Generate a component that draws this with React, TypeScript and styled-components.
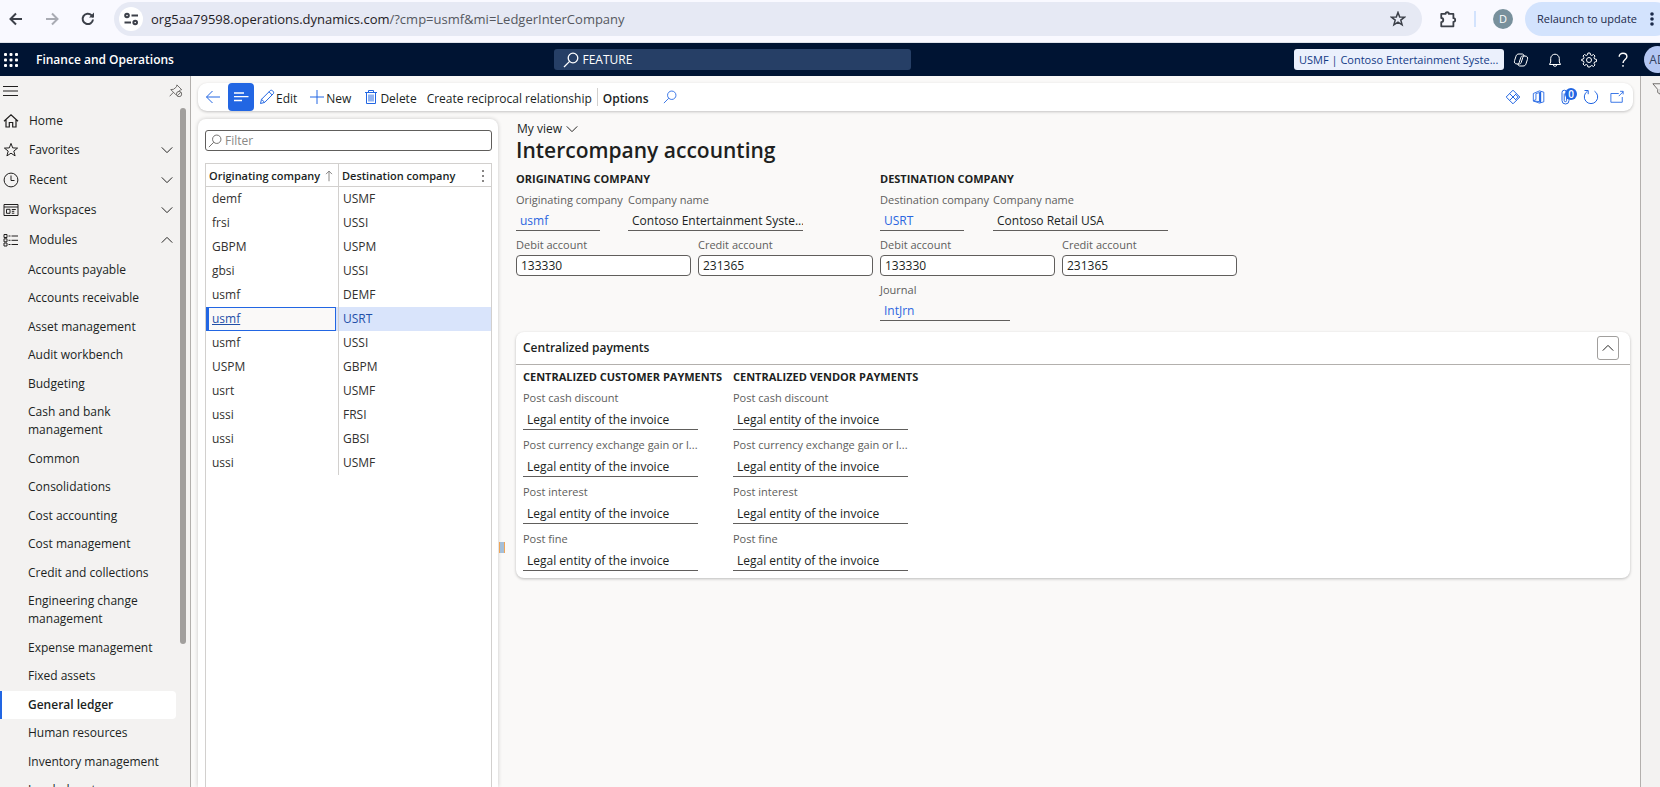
import React from "react";
import styled, { createGlobalStyle, css } from "styled-components";

const color = {
  text: "#201f1e",
  muted: "#605e5c",
  line: "#d2d0ce",
  page: "#faf9f8",
  rail: "#f3f2f1",
  brand: "#2266e3",
  link: "#2b66e0",
  navy: "#001433",
};

const GlobalStyle = createGlobalStyle`
  * { box-sizing: border-box; }
  body {
    margin: 0;
    font-family: "Open Sans", "Noto Sans", sans-serif;
    font-size: 12px;
    line-height: 16px;
    color: ${color.text};
    background: ${color.page};
  }
  button, input { font: inherit; color: inherit; }
  h1, h2, ul { margin: 0; padding: 0; }
  ul { list-style: none; }
  a { color: inherit; text-decoration: none; }
`;

/* ---------- icons ---------- */

type IconProps = { size?: number; stroke?: number; children: React.ReactNode };

const Icon = ({ size = 16, stroke = 1, children }: IconProps) => (
  <svg
    width={size}
    height={size}
    viewBox="0 0 16 16"
    fill="none"
    stroke="currentColor"
    strokeWidth={stroke}
    aria-hidden="true"
  >
    {children}
  </svg>
);

const ArrowIcon = ({ flip = false }: { flip?: boolean }) => (
  <Icon stroke={2}>
    {flip ? <path d="M2 8h11M8 2.5L13.5 8 8 13.5" /> : <path d="M14 8H3M8 2.5L2.5 8 8 13.5" />}
  </Icon>
);
const ReloadIcon = () => (
  <Icon stroke={2}>
    <path d="M13 8.5A5.2 5.2 0 1 1 11.5 4.2L13.4 6" />
    <path d="M14 1.5v5H9z" fill="currentColor" stroke="none" />
  </Icon>
);
const SiteInfoIcon = () => (
  <Icon stroke={2}>
    <circle cx="4" cy="4.5" r="1.8" />
    <path d="M8.5 4.5H15M1.5 11.5H8" />
    <circle cx="12.2" cy="11.5" r="1.8" />
  </Icon>
);
const StarIcon = ({ stroke = 1 }: { stroke?: number }) => (
  <Icon stroke={stroke}>
    <path d="M8 1.4l1.7 4.5 4.9.2-3.8 3 1.3 4.8L8 11.2l-4.1 2.7 1.3-4.8-3.8-3 4.9-.2z" />
  </Icon>
);
const PuzzleIcon = () => (
  <Icon size={18} stroke={1.6}>
    <path
      d="M2 3.500h3.800a1.500 1.500 0 0 1 3 0H12.800v3.800a1.600 1.600 0 0 1 0 3.200V14.500H2v-3.800a1.800 1.800 0 0 0 0-3.600z"
      strokeLinejoin="round"
    />
  </Icon>
);
const DotsIcon = ({ r = 1.5 }: { r?: number }) => (
  <Icon>
    <g fill="currentColor" stroke="none">
      <circle cx="8" cy="3" r={r} />
      <circle cx="8" cy="8" r={r} />
      <circle cx="8" cy="13" r={r} />
    </g>
  </Icon>
);
const WaffleIcon = () => (
  <Icon>
    <g fill="currentColor" stroke="none">
      {[1, 6.5, 12].map((y) => [1, 6.5, 12].map((x) => <rect key={`${x}-${y}`} x={x} y={y} width="3" height="3" rx="1" />))}
    </g>
  </Icon>
);
const SearchIcon = ({ size = 16, stroke = 1 }: { size?: number; stroke?: number }) => (
  <Icon size={size} stroke={stroke}>
    <circle cx="10" cy="6" r="4.8" />
    <path d="M6.600 9.400L1 15" />
  </Icon>
);
const CopilotIcon = () => (
  <Icon>
    <path d="M6.500 12H4.400C1.500 12 1 10.400 1.600 8.500L3 4.200C3.600 2.500 4.400 2 6 2h3.200c1 0 1.600.6 1.900 2M9.500 4h2.100c2.900 0 3.400 1.600 2.800 3.500L13 11.800c-.6 1.700-1.400 2.200-3 2.200H6.800c-1 0-1.600-.6-1.900-2" />
    <path d="M9.500 4C8.400 4 8 4.800 7.700 5.800L6.300 10.200C6 11.300 5.600 12 4.600 12M6.500 12c1.100 0 1.500-.8 1.800-1.800l1.400-4.400C10 4.700 10.400 4 11.400 4" />
  </Icon>
);
const BellIcon = () => (
  <Icon>
    <path d="M2.500 12.500h11L12.300 10V6.500a4.300 4.300 0 0 0-8.600 0V10z" strokeLinejoin="round" />
    <path d="M6.200 12.500a1.800 1.800 0 0 0 3.600 0" />
  </Icon>
);
const GearIcon = () => (
  <Icon>
    <path d="M6.900 1h2.200l.4 1.900 1.300.6 1.700-1 1.500 1.500-1 1.700.6 1.300 1.900.4v2.200l-1.900.4-.6 1.300 1 1.700-1.500 1.500-1.700-1-1.300.6L9.100 15H6.900l-.4-1.900-1.300-.6-1.700 1L2 12l1-1.700L2.400 9 .6 8.600V7.400L2.400 7 3 5.700 2 4l1.500-1.500 1.700 1 1.300-.6z" />
    <circle cx="8" cy="8" r="2.500" />
  </Icon>
);
const HelpIcon = () => (
  <Icon stroke={1.4}>
    <path d="M4.200 4.800C4.200 2.500 5.800 1.300 8 1.300s3.900 1.300 3.900 3.400C11.900 7.300 8 7.700 8 11" />
    <path d="M8 13v1.700" />
  </Icon>
);
const MenuIcon = () => (
  <Icon>
    <path d="M1 3.500h15M1 8h15M1 12.500h15" />
  </Icon>
);
const PinIcon = () => (
  <Icon size={14}>
    <path d="M9 1l5.500 5.500-1.600.3-2 2M9 1l-.4 2.200L5.300 6 2 6.400l6 6M5 9.500L.8 14" />
    <circle cx="11.500" cy="11.500" r="3" />
    <path d="M9.400 13.600l4.200-4.200" />
  </Icon>
);
const HomeIcon = () => (
  <Icon stroke={1.2}>
    <path d="M1 8.300L8 1.800l7 6.500M3 6.600V14h3.300V9.500h3.400V14H13V6.600" />
  </Icon>
);
const ClockIcon = () => (
  <Icon>
    <circle cx="8" cy="8" r="6.900" />
    <path d="M8 3.500V8.500h3.500" />
  </Icon>
);
const WorkspaceIcon = () => (
  <Icon>
    <path d="M1 2.500h14v11H1zM1 5h14M3.500 7.300h3.500v4H3.500zM8.800 7.500h4M8.800 9.300h2.500M8.800 11.200h2.500" />
  </Icon>
);
const ModulesIcon = () => (
  <Icon>
    <path d="M1 2.500h3v3H1zM1 6.800h3v3H1zM1 11h3v3H1zM5.500 4h2M5.500 8.300h2M5.500 12.500h2M8.500 4H15M8.500 8.300H15M8.500 12.500H15" />
  </Icon>
);
const ChevronIcon = ({ up = false }: { up?: boolean }) => (
  <Icon size={12} stroke={1.3}>
    {up ? <path d="M1 11.500l7-7 7 7" /> : <path d="M1 4.500l7 7 7-7" />}
  </Icon>
);
const BackIcon = () => (
  <Icon>
    <path d="M15 8H1.500M7.500 2L1.500 8l6 6" />
  </Icon>
);
const LinesIcon = () => (
  <Icon stroke={1.3}>
    <path d="M1 4h10M1 7.700h14.500M1 11.500h8" />
  </Icon>
);
const PencilIcon = () => (
  <Icon>
    <path d="M1.500 14.500l1-4.200 8.800-8.800c1.500-1.100 4.200 1.400 3.100 3.100l-8.700 8.800zM10 2.800l3.200 3.200M2.500 10.300l3.200 3.100" />
  </Icon>
);
const PlusIcon = () => (
  <Icon>
    <path d="M8 1v14M1 8h14" />
  </Icon>
);
const TrashIcon = () => (
  <Icon>
    <path d="M2 3.500h12M5.500 3.500v-2h5v2M3.500 3.500v11h9v-11" />
    <path d="M6 5.500v7M8 5.500v7M10 5.500v7" />
  </Icon>
);
const DiamondIcon = () => (
  <Icon>
    <path d="M8 1.200l6.800 6.800L8 14.800 1.200 8zM4.600 4.600l3.400 3.400 3.400-3.400M8 8L4.600 11.400M8 8l3.400 3.400M8 8l2.600-2.600 2.600 2.600-2.600 2.600z" strokeLinejoin="round" />
  </Icon>
);
const OfficeIcon = () => (
  <Icon size={14}>
    <path d="M1.500 4L8.500 1l5 1.500v11L8.500 15l-7-2.500 7 .8V3L4.500 4v7l-3 1.300z" strokeLinejoin="round" />
    <path d="M9.500 2v12.500" strokeWidth="2" />
  </Icon>
);
const ClipIcon = () => (
  <Icon>
    <path d="M12 3v8.500a3.500 3.500 0 0 1-7 0V3.500a2.300 2.300 0 0 1 4.600 0v8a1.200 1.200 0 0 1-2.400 0V4.500" />
  </Icon>
);
const RefreshIcon = () => (
  <Icon>
    <path d="M11.500 2.200A6.700 6.700 0 1 1 4.500 2.200" />
    <path d="M1.500 1.500h3.700v3.700" />
  </Icon>
);
const PopoutIcon = () => (
  <Icon size={14}>
    <path d="M10 4H1v10h13V8M10 7l5-5M11.500 1.500H15V5" />
  </Icon>
);
const FunnelIcon = () => (
  <Icon size={14}>
    <path d="M1 2h14L9.500 8.500V14l-3-2V8.500z" />
  </Icon>
);
const SortUpIcon = () => (
  <Icon size={12}>
    <path d="M8 15V1.500M4 5.500l4-4 4 4" />
  </Icon>
);

/* ---------- browser bar ---------- */

const Shell = styled.div`
  display: flex;
  flex-direction: column;
  height: 100vh;
  overflow: hidden;
`;

const BrowserBar = styled.div`
  display: flex;
  align-items: flex-start;
  flex: none;
  height: 43px;
  padding-top: 2px;
  background: #f9f9ff;
  border-bottom: 1px solid #dfe3ea;
  color: #3c4049;
`;

const BarButton = styled.button<{ $faded?: boolean; $width: number }>`
  display: flex;
  align-items: center;
  justify-content: center;
  width: ${(p) => p.$width}px;
  height: 34px;
  padding: 0;
  border: 0;
  background: none;
  ${(p) => p.$faded && css`color: #a9abb3;`}
`;

const NavButtons = styled.div`
  display: flex;
  width: 114px;
  padding-right: 8px;
`;

const Omnibox = styled.div`
  display: flex;
  flex: 1;
  align-items: center;
  height: 34px;
  padding-left: 5px;
  border-radius: 17px;
  background: #e6e9f4;
`;

const SiteInfo = styled.button`
  display: flex;
  align-items: center;
  justify-content: center;
  width: 24px;
  height: 24px;
  margin-right: 8px;
  padding: 0;
  border: 0;
  border-radius: 50%;
  background: #ffffff;
`;

const Url = styled.div`
  flex: 1;
  font-size: 13px;
  line-height: 20px;
  color: #55585f;
  white-space: nowrap;
  b {
    font-weight: 400;
    color: #1f2024;
  }
`;

const BarDivider = styled.span`
  width: 2px;
  height: 16px;
  margin: 9px 17px 0 0;
  background: #d3e3fd;
`;

const ProfileBadge = styled.button`
  width: 20px;
  height: 20px;
  margin: 7px 12px 0 0;
  padding: 0;
  border: 0;
  border-radius: 50%;
  background: #78909c;
  color: #ffffff;
  font-size: 11px;
  line-height: 20px;
`;

const Relaunch = styled.button`
  display: flex;
  align-items: center;
  gap: 7px;
  height: 34px;
  margin-right: -12px;
  padding: 0 12px;
  border: 0;
  border-radius: 17px;
  background: #d3e3fd;
  color: #1b2a4a;
  font-size: 11px;
  white-space: nowrap;
`;

/* ---------- application header ---------- */

const AppHeader = styled.header`
  display: grid;
  grid-template-columns: 20fr 357px 27fr;
  align-items: center;
  flex: none;
  height: 33px;
  overflow: hidden;
  background: ${color.navy};
  color: #ffffff;
`;

const Brand = styled.div`
  display: flex;
  align-items: center;
  gap: 17px;
  padding-left: 3px;
  font-weight: 600;
`;

const PlainButton = styled.button`
  display: flex;
  padding: 0;
  border: 0;
  background: none;
`;

const GlobalSearch = styled.label`
  display: flex;
  align-items: center;
  gap: 3px;
  height: 21px;
  padding-left: 9px;
  border-radius: 3px;
  background: #263f66;
  input {
    flex: 1;
    min-width: 0;
    padding: 0;
    border: 0;
    outline: 0;
    background: none;
  }
`;

const HeaderTools = styled.div`
  display: flex;
  align-items: center;
  justify-content: flex-end;
`;

const CompanyPicker = styled.button`
  width: 210px;
  height: 21px;
  padding: 0 5px;
  border: 0;
  border-radius: 3px;
  background: #ebf0fc;
  color: #123a86;
  font-size: 11px;
  text-align: left;
  white-space: nowrap;
`;

const HeaderButton = styled(PlainButton)`
  align-items: center;
  justify-content: center;
  width: 34px;
  height: 33px;
`;

const Avatar = styled.button`
  flex: none;
  width: 27px;
  height: 27px;
  margin: 0 -11px 0 4px;
  padding: 0;
  border: 0;
  border-radius: 50%;
  background: #b4c7f3;
  color: #33415f;
`;

/* ---------- navigation ---------- */

const Body = styled.div`
  display: flex;
  flex: 1;
  min-height: 0;
`;

const Sidebar = styled.nav`
  display: flex;
  flex-direction: column;
  flex: none;
  width: 191px;
  border-right: 1px solid #b3b0ad;
  background: ${color.rail};
`;

const SidebarTop = styled.div`
  display: flex;
  align-items: center;
  justify-content: space-between;
  height: 32px;
  padding: 0 7px 2px 2px;
  color: ${color.muted};
  button:first-child {
    color: ${color.text};
  }
`;

const SidebarScroll = styled.div`
  display: flex;
  flex: 1;
  min-height: 0;
  overflow: hidden;
`;

const NavList = styled.div`
  width: 176px;
  ul {
    padding-top: 1px;
  }
`;

const NavRow = styled.button`
  display: flex;
  align-items: center;
  gap: 10px;
  width: 100%;
  height: 30px;
  padding: 0 3px;
  border: 0;
  background: none;
  text-align: left;
  span {
    flex: 1;
  }
  &:first-child {
    height: 27px;
    padding-bottom: 2px;
  }
`;

const ModuleItem = styled.li<{ $active?: boolean }>`
  padding: 5px 8px 5px 28px;
  line-height: 18px;
  border-radius: 0 4px 4px 0;
  &:nth-child(even) {
    padding-bottom: 6px;
  }
  ${(p) =>
    p.$active &&
    css`
      padding-left: 26px;
      border-left: 2px solid ${color.brand};
      background: #ffffff;
      font-weight: 600;
    `}
`;

const ScrollTrack = styled.div`
  width: 6px;
  margin-left: 4px;
`;

const ScrollThumb = styled.div`
  height: 79%;
  border-radius: 3px;
  background: #a19f9d;
`;

/* ---------- work area ---------- */

const Main = styled.main`
  display: flex;
  flex-direction: column;
  flex: 1;
  min-width: 0;
  padding: 7px 7px 0 7px;
`;

const Toolbar = styled.div`
  display: flex;
  align-items: center;
  flex: none;
  height: 28px;
  padding-right: 3px;
  border-radius: 9px;
  background: #ffffff;
  box-shadow: 0 1px 3px rgba(0, 0, 0, 0.22);
`;

const Action = styled.button<{ $strong?: boolean; $pad?: number }>`
  display: flex;
  align-items: center;
  gap: 1px;
  padding: 3px ${(p) => p.$pad ?? 5}px 0;
  border: 0;
  background: none;
  font-weight: ${(p) => (p.$strong ? 600 : 400)};
  white-space: nowrap;
  svg {
    margin-top: -3px;
    color: ${color.brand};
  }
`;

const ToggleList = styled.button`
  display: flex;
  align-items: center;
  justify-content: center;
  width: 26px;
  height: 28px;
  padding: 0;
  border: 0;
  border-radius: 4px;
  background: ${color.brand};
  color: #ffffff;
`;

const ToolbarDivider = styled.span`
  width: 1px;
  height: 18px;
  background: ${color.line};
`;

const ToolbarEnd = styled.div`
  display: flex;
  flex: 1;
  justify-content: flex-end;
`;

const ToolButton = styled(PlainButton)`
  position: relative;
  align-items: center;
  justify-content: center;
  width: 26px;
  height: 28px;
  color: ${color.brand};
`;

const CountBadge = styled.span`
  position: absolute;
  top: 5px;
  right: 1px;
  width: 12px;
  height: 12px;
  border-radius: 50%;
  background: ${color.brand};
  color: #ffffff;
  font-size: 10px;
  font-weight: 600;
  line-height: 12px;
  text-align: center;
`;

const Workspace = styled.div`
  display: flex;
  flex: 1;
  min-height: 0;
  padding-top: 8px;
`;

const ListPanel = styled.section`
  display: flex;
  flex-direction: column;
  flex: none;
  width: 300px;
  padding: 11px 6px 0 7px;
  border-radius: 8px 8px 0 0;
  background: #ffffff;
  box-shadow: 0 0 4px rgba(0, 0, 0, 0.2);
`;

const FilterBox = styled.label`
  display: flex;
  align-items: center;
  gap: 3px;
  flex: none;
  height: 21px;
  padding: 1px 2px 0;
  border: 1px solid ${color.muted};
  border-radius: 3px;
  color: ${color.muted};
  input {
    flex: 1;
    min-width: 0;
    padding: 0;
    border: 0;
    outline: 0;
    background: none;
  }
  input::placeholder {
    color: #8a8886;
    opacity: 1;
  }
`;

const GridFrame = styled.div`
  flex: 1;
  margin-top: 12px;
  border: 1px solid ${color.line};
  border-bottom: 0;
`;

const Grid = styled.table`
  width: 100%;
  table-layout: fixed;
  border-collapse: separate;
  border-spacing: 0;
  th {
    height: 23px;
    padding: 2px 3px 0;
    border-bottom: 1px solid ${color.line};
    font-weight: 600;
    font-size: 11px;
    text-align: left;
    white-space: nowrap;
  }
  th:first-child {
    width: 132px;
  }
  th + th {
    padding-right: 0;
  }
  td {
    height: 24px;
    padding: 0 6px;
    color: #323130;
  }
  th + th,
  td + td {
    border-left: 1px solid ${color.line};
  }
  td + td {
    padding-left: 4px;
  }
`;

const HeadCell = styled.div`
  display: flex;
  align-items: center;
  justify-content: space-between;
  > svg,
  button {
    color: ${color.muted};
  }
`;

const SelectedRow = styled.tr`
  td {
    background: #d9e4fb;
    color: #1f4fa8;
  }
  td:first-child {
    padding: 0 2px 0 0;
  }
  a {
    display: block;
    height: 24px;
    padding-left: 3px;
    border: 1px solid ${color.brand};
    border-left-width: 3px;
    background: ${color.page};
    line-height: 22px;
    text-decoration: underline;
  }
`;

const Splitter = styled.div`
  display: flex;
  align-items: center;
  justify-content: center;
  flex: none;
  width: 8px;
  padding-top: 188px;
  &::after {
    content: "";
    width: 4px;
    height: 11px;
    border: solid #efa558;
    border-width: 0 1px 0 1px;
    background: #a5bfd8;
  }
`;

const FormArea = styled.section`
  flex: 1;
  min-width: 0;
  padding: 0 3px 0 10px;
`;

const ViewPicker = styled.button`
  display: flex;
  align-items: center;
  gap: 4px;
  height: 18px;
  padding: 1px 0 0 1px;
  border: 0;
  background: none;
`;

const Title = styled.h1`
  font-size: 21px;
  font-weight: 600;
  line-height: 26px;
`;

const GroupTitle = styled.h2`
  margin-bottom: 5px;
  font-size: 11px;
  font-weight: 700;
  line-height: 16px;
  white-space: nowrap;
`;

const Groups = styled.div`
  display: flex;
  gap: 7px;
  margin-top: 8px;
`;

const Group = styled.div`
  width: 357px;
`;

const FieldRow = styled.div<{ $gap?: number }>`
  display: flex;
  gap: 7px;
  margin-bottom: ${(p) => p.$gap ?? 6}px;
`;

const FieldBox = styled.div<{ $width: number; $gap: number }>`
  display: flex;
  flex-direction: column;
  gap: ${(p) => p.$gap}px;
  width: ${(p) => p.$width}px;
  label {
    color: ${color.muted};
    font-size: 11px;
    line-height: 16px;
    white-space: nowrap;
  }
`;

const EditInput = styled.input`
  width: 175px;
  height: 21px;
  padding: 0 4px;
  border: 1px solid ${color.muted};
  border-radius: 4px;
  outline: 0;
  background: #ffffff;
`;

const readOnlyBox = css<{ $width: number }>`
  width: ${(p) => p.$width}px;
  height: 21px;
  padding: 0 0 0 4px;
  border: 0;
  border-bottom: 1px solid ${color.muted};
  outline: 0;
  background: none;
`;

const ReadInput = styled.input<{ $width: number }>`
  ${readOnlyBox}
`;

const ReadLink = styled.a<{ $width: number }>`
  ${readOnlyBox}
  color: ${color.link};
  line-height: 22px;
`;

const Card = styled.section`
  margin-top: 5px;
  border-radius: 8px;
  background: #ffffff;
  box-shadow: 0 1px 3px rgba(0, 0, 0, 0.25);
`;

const CardHeader = styled.div`
  display: flex;
  align-items: center;
  justify-content: space-between;
  height: 33px;
  padding: 0 11px 0 7px;
  border-bottom: 1px solid #b3b0ad;
  h2 {
    font-size: 12px;
    font-weight: 600;
  }
`;

const CollapseButton = styled.button`
  display: flex;
  align-items: center;
  justify-content: center;
  width: 22px;
  height: 24px;
  padding: 0;
  border: 1px solid #a19f9d;
  border-radius: 3px;
  background: #ffffff;
`;

const CardBody = styled.div`
  display: flex;
  gap: 7px;
  padding: 4px 7px 0;
`;

const PaymentColumn = styled.div`
  width: 203px;
`;

const RightRail = styled.aside`
  flex: none;
  width: 20px;
  padding: 6px 0 0 11px;
  overflow: hidden;
  border-left: 1px solid #b3b0ad;
  background: ${color.rail};
  color: ${color.muted};
`;

/* ---------- data ---------- */

const sections = [
  { label: "Home", icon: <HomeIcon /> },
  { label: "Favorites", icon: <StarIcon />, chevron: "down" },
  { label: "Recent", icon: <ClockIcon />, chevron: "down" },
  { label: "Workspaces", icon: <WorkspaceIcon />, chevron: "down" },
  { label: "Modules", icon: <ModulesIcon />, chevron: "up" },
];

const modules = [
  "Accounts payable",
  "Accounts receivable",
  "Asset management",
  "Audit workbench",
  "Budgeting",
  "Cash and bank management",
  "Common",
  "Consolidations",
  "Cost accounting",
  "Cost management",
  "Credit and collections",
  "Engineering change management",
  "Expense management",
  "Fixed assets",
  "General ledger",
  "Human resources",
  "Inventory management",
  "Landed cost",
];

const pairs = [
  ["demf", "USMF"],
  ["frsi", "USSI"],
  ["GBPM", "USPM"],
  ["gbsi", "USSI"],
  ["usmf", "DEMF"],
  ["usmf", "USRT"],
  ["usmf", "USSI"],
  ["USPM", "GBPM"],
  ["usrt", "USMF"],
  ["ussi", "FRSI"],
  ["ussi", "GBSI"],
  ["ussi", "USMF"],
];
const selectedIndex = 5;

const paymentFields = ["Post cash discount", "Post currency exchange gain or l...", "Post interest", "Post fine"];

/* ---------- pieces ---------- */

type FieldProps = {
  id: string;
  label: string;
  value: string;
  kind: "edit" | "read" | "link";
  width?: number;
  lineWidth?: number;
  gap?: number;
};

const Field = ({ id, label, value, kind, width = 175, lineWidth = 175, gap = 2 }: FieldProps) => (
  <FieldBox $width={width} $gap={gap}>
    <label htmlFor={id}>{label}</label>
    {kind === "edit" && <EditInput id={id} defaultValue={value} />}
    {kind === "read" && <ReadInput id={id} $width={lineWidth} defaultValue={value} readOnly />}
    {kind === "link" && (
      <ReadLink id={id} $width={lineWidth} href="#">
        {value}
      </ReadLink>
    )}
  </FieldBox>
);

const Payments = ({ id, title }: { id: string; title: string }) => (
  <PaymentColumn>
    <GroupTitle>{title}</GroupTitle>
    {paymentFields.map((label, i) => (
      <FieldRow key={label} $gap={7}>
        <Field id={`${id}-${i}`} label={label} value="Legal entity of the invoice" kind="read" gap={3} />
      </FieldRow>
    ))}
  </PaymentColumn>
);

export default function App() {
  return (
    <Shell>
      <GlobalStyle />
      <BrowserBar>
        <NavButtons>
          <BarButton $width={32} aria-label="Back">
            <ArrowIcon />
          </BarButton>
          <BarButton $width={40} $faded aria-label="Forward">
            <ArrowIcon flip />
          </BarButton>
          <BarButton $width={32} aria-label="Reload">
            <ReloadIcon />
          </BarButton>
        </NavButtons>
        <Omnibox>
          <SiteInfo aria-label="Site information">
            <SiteInfoIcon />
          </SiteInfo>
          <Url>
            <b>org5aa79598.operations.dynamics.com</b>/?cmp=usmf&amp;mi=LedgerInterCompany
          </Url>
          <BarButton $width={48} aria-label="Bookmark">
            <StarIcon stroke={1.5} />
          </BarButton>
        </Omnibox>
        <BarButton $width={52} aria-label="Extensions">
          <PuzzleIcon />
        </BarButton>
        <BarDivider />
        <ProfileBadge>D</ProfileBadge>
        <Relaunch>
          Relaunch to update
          <DotsIcon r={1.8} />
        </Relaunch>
      </BrowserBar>

      <AppHeader>
        <Brand>
          <PlainButton aria-label="App launcher">
            <WaffleIcon />
          </PlainButton>
          Finance and Operations
        </Brand>
        <GlobalSearch>
          <SearchIcon stroke={1.3} />
          <input aria-label="Search" defaultValue="FEATURE" />
        </GlobalSearch>
        <HeaderTools>
          <CompanyPicker>USMF | Contoso Entertainment Syste...</CompanyPicker>
          <HeaderButton aria-label="Copilot">
            <CopilotIcon />
          </HeaderButton>
          <HeaderButton aria-label="Notifications">
            <BellIcon />
          </HeaderButton>
          <HeaderButton aria-label="Settings">
            <GearIcon />
          </HeaderButton>
          <HeaderButton aria-label="Help">
            <HelpIcon />
          </HeaderButton>
          <Avatar>AD</Avatar>
        </HeaderTools>
      </AppHeader>

      <Body>
        <Sidebar>
          <SidebarTop>
            <PlainButton aria-label="Collapse navigation">
              <MenuIcon />
            </PlainButton>
            <PlainButton aria-label="Unpin navigation">
              <PinIcon />
            </PlainButton>
          </SidebarTop>
          <SidebarScroll>
            <NavList>
              {sections.map((s) => (
                <NavRow key={s.label}>
                  {s.icon}
                  <span>{s.label}</span>
                  {s.chevron && <ChevronIcon up={s.chevron === "up"} />}
                </NavRow>
              ))}
              <ul>
                {modules.map((m) => (
                  <ModuleItem key={m} $active={m === "General ledger"}>
                    <a href="#">{m}</a>
                  </ModuleItem>
                ))}
              </ul>
            </NavList>
            <ScrollTrack>
              <ScrollThumb />
            </ScrollTrack>
          </SidebarScroll>
        </Sidebar>

        <Main>
          <Toolbar>
            <Action $pad={7} aria-label="Back">
              <BackIcon />
            </Action>
            <ToggleList aria-label="Show list">
              <LinesIcon />
            </ToggleList>
            <Action>
              <PencilIcon />
              Edit
            </Action>
            <Action $pad={7}>
              <PlusIcon />
              New
            </Action>
            <Action>
              <TrashIcon />
              Delete
            </Action>
            <Action>Create reciprocal relationship</Action>
            <ToolbarDivider />
            <Action $strong $pad={5}>
              Options
            </Action>
            <Action $pad={9} aria-label="Search actions">
              <SearchIcon size={14} />
            </Action>
            <ToolbarEnd>
              <ToolButton aria-label="Power Apps">
                <DiamondIcon />
              </ToolButton>
              <ToolButton aria-label="Open in Office">
                <OfficeIcon />
              </ToolButton>
              <ToolButton aria-label="Attachments">
                <ClipIcon />
                <CountBadge>0</CountBadge>
              </ToolButton>
              <ToolButton aria-label="Refresh">
                <RefreshIcon />
              </ToolButton>
              <ToolButton aria-label="Open in new window">
                <PopoutIcon />
              </ToolButton>
            </ToolbarEnd>
          </Toolbar>

          <Workspace>
            <ListPanel>
              <FilterBox>
                <SearchIcon size={14} />
                <input aria-label="Filter" placeholder="Filter" />
              </FilterBox>
              <GridFrame>
                <Grid>
                  <thead>
                    <tr>
                      <th>
                        <HeadCell>
                          Originating company
                          <SortUpIcon />
                        </HeadCell>
                      </th>
                      <th>
                        <HeadCell>
                          Destination company
                          <PlainButton aria-label="Grid options">
                            <DotsIcon r={1} />
                          </PlainButton>
                        </HeadCell>
                      </th>
                    </tr>
                  </thead>
                  <tbody>
                    {pairs.map(([from, to], i) =>
                      i === selectedIndex ? (
                        <SelectedRow key={i}>
                          <td>
                            <a href="#">{from}</a>
                          </td>
                          <td>{to}</td>
                        </SelectedRow>
                      ) : (
                        <tr key={i}>
                          <td>{from}</td>
                          <td>{to}</td>
                        </tr>
                      )
                    )}
                  </tbody>
                </Grid>
              </GridFrame>
            </ListPanel>
            <Splitter />
            <FormArea>
              <ViewPicker>
                My view
                <ChevronIcon />
              </ViewPicker>
              <Title>Intercompany accounting</Title>
              <Groups>
                <Group>
                  <GroupTitle>ORIGINATING COMPANY</GroupTitle>
                  <FieldRow>
                    <Field id="orig-company" label="Originating company" value="usmf" kind="link" width={105} lineWidth={84} />
                    <Field id="orig-name" label="Company name" value="Contoso Entertainment Syste..." kind="read" />
                  </FieldRow>
                  <FieldRow>
                    <Field id="orig-debit" label="Debit account" value="133330" kind="edit" />
                    <Field id="orig-credit" label="Credit account" value="231365" kind="edit" />
                  </FieldRow>
                </Group>
                <Group>
                  <GroupTitle>DESTINATION COMPANY</GroupTitle>
                  <FieldRow>
                    <Field id="dest-company" label="Destination company" value="USRT" kind="link" width={106} lineWidth={84} />
                    <Field id="dest-name" label="Company name" value="Contoso Retail USA" kind="read" />
                  </FieldRow>
                  <FieldRow>
                    <Field id="dest-debit" label="Debit account" value="133330" kind="edit" />
                    <Field id="dest-credit" label="Credit account" value="231365" kind="edit" />
                  </FieldRow>
                  <FieldRow>
                    <Field id="journal" label="Journal" value="IntJrn" kind="link" lineWidth={130} />
                  </FieldRow>
                </Group>
              </Groups>
              <Card>
                <CardHeader>
                  <h2>Centralized payments</h2>
                  <CollapseButton aria-label="Collapse section">
                    <ChevronIcon up />
                  </CollapseButton>
                </CardHeader>
                <CardBody>
                  <Payments id="customer" title="CENTRALIZED CUSTOMER PAYMENTS" />
                  <Payments id="vendor" title="CENTRALIZED VENDOR PAYMENTS" />
                </CardBody>
              </Card>
            </FormArea>
          </Workspace>
        </Main>
        <RightRail>
          <FunnelIcon />
        </RightRail>
      </Body>
    </Shell>
  );
}
